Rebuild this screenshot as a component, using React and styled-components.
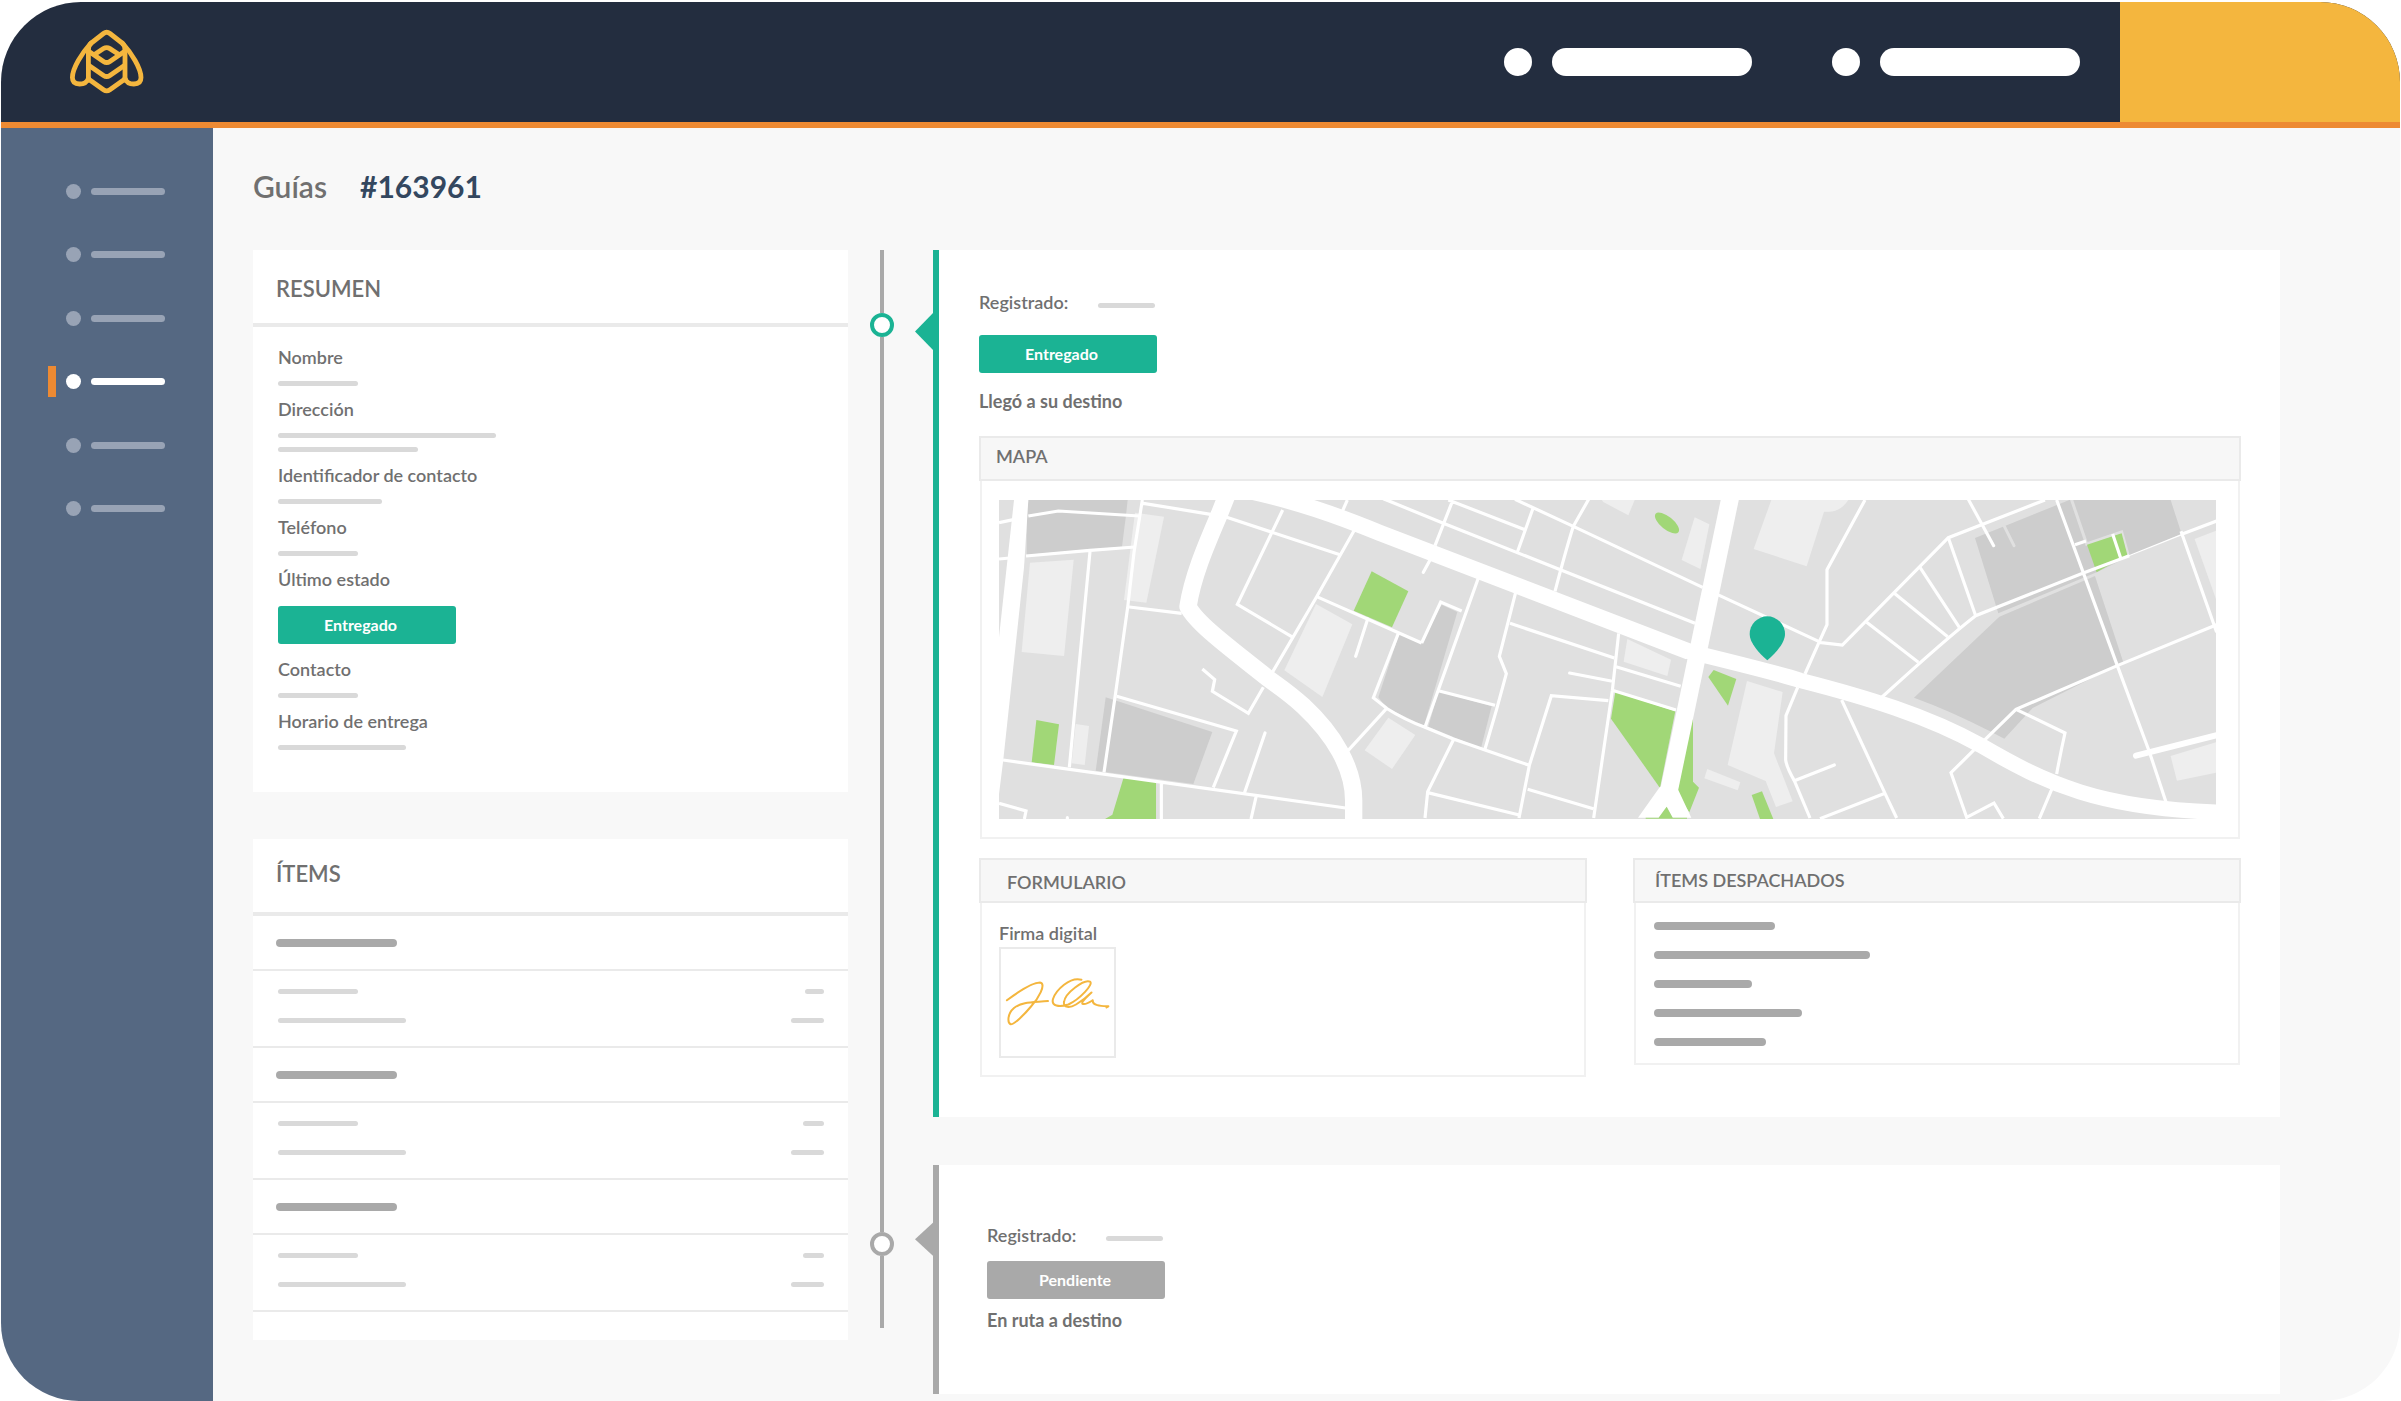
import React from "react";
import styled, { createGlobalStyle } from "styled-components";

const color = {
  navy: "#232d3f",
  slate: "#556882",
  slateLight: "#98a3b5",
  orange: "#ed8a33",
  yellow: "#f4b63e",
  teal: "#1bb394",
  text: "#707070",
  number: "#33475f",
  page: "#f8f8f8",
  line: "#eaeaea",
  lineSoft: "#f1f1f1",
  bar: "#d9d9d9",
  barStrong: "#a9a9a9",
};

const GlobalStyle = createGlobalStyle`
  *, *::before, *::after { box-sizing: border-box; }
  body {
    margin: 0;
    background: #fff;
    color: ${color.text};
    font-family: Lato, "Open Sans", sans-serif;
    font-size: 18px;
    line-height: 24px;
    font-weight: 600;
  }
  h1, h2, h3, p, ul, dl, dd, dt { margin: 0; padding: 0; }
  ul { list-style: none; }
`;

const Frame = styled.div`
  display: flex;
  flex-direction: column;
  min-height: calc(100vh - 2px);
  margin: 2px 1px 0;
  overflow: hidden;
  background: ${color.page};
  border-radius: 80px 80px 78px 78px;
`;

const Header = styled.header`
  display: flex;
  align-items: stretch;
  height: 126px;
  background: ${color.navy};
  border-bottom: 6px solid ${color.orange};
`;

const LogoLink = styled.a`
  display: flex;
  align-items: center;
  margin-left: 68px;
`;

const HeaderNav = styled.nav`
  display: flex;
  align-items: center;
  gap: 80px;
  margin-left: auto;
  padding-right: 40px;
`;

const HeaderLink = styled.a`
  display: flex;
  gap: 20px;
`;

const HeaderDot = styled.span`
  width: 28px;
  height: 28px;
  border-radius: 50%;
  background: #fff;
`;

const HeaderPill = styled.span`
  width: 200px;
  height: 28px;
  border-radius: 14px;
  background: #fff;
`;

const HeaderAccent = styled.div`
  width: 280px;
  background: ${color.yellow};
`;

const Body = styled.div`
  display: flex;
  flex: 1;
`;

const Sidebar = styled.nav`
  flex: none;
  width: 212px;
  padding: 48px 0;
  background: ${color.slate};
`;

const SideList = styled.ul`
  display: flex;
  flex-direction: column;
  justify-content: space-between;
  height: 348px;
`;

const SideLink = styled.a`
  display: flex;
  align-items: center;
  height: 31px;
  margin-left: 47px;
  padding-left: 10px;
  gap: 10px;
  color: ${(p) => (p.$active ? "#fff" : color.slateLight)};
  border-left: 8px solid ${(p) => (p.$active ? color.orange : "transparent")};
`;

const SideDot = styled.span`
  width: 15px;
  height: 15px;
  border-radius: 50%;
  background: currentColor;
`;

const SideBar = styled.span`
  width: 74px;
  height: 7px;
  border-radius: 4px;
  background: currentColor;
`;

const Main = styled.main`
  flex: 1;
  min-width: 0;
  padding: 40px 120px 7px 40px;
`;

const Title = styled.h1`
  display: flex;
  gap: 33px;
  margin-bottom: 46px;
  font-size: 30px;
  line-height: 36px;
  font-weight: 600;
`;

const GuideNumber = styled.span`
  color: ${color.number};
  font-weight: 700;
`;

const Columns = styled.div`
  display: grid;
  grid-template-columns: minmax(0, 595fr) 85px minmax(0, 1347fr);
`;

const Stack = styled.div`
  display: flex;
  flex-direction: column;
  gap: ${(p) => p.$gap}px;
`;

const Card = styled.section`
  background: #fff;
  padding-bottom: ${(p) => p.$bottom}px;
`;

const CardTitle = styled.h2`
  height: 77px;
  padding: ${(p) => p.$top}px 23px 0;
  font-size: 22px;
  line-height: 28px;
  font-weight: 600;
  border-bottom: 4px solid ${color.line};
`;

const Fields = styled.dl`
  display: flex;
  flex-direction: column;
  gap: 11px;
  padding: 18px 25px 0;
`;

const Field = styled.div`
  display: flex;
  flex-direction: column;
  gap: 12px;
  padding-bottom: ${(p) => (p.$badge ? 2 : 0)}px;
`;

const FieldValue = styled.dd`
  display: flex;
  flex-direction: column;
  gap: 9px;
  padding-top: ${(p) => (p.$badge ? 3 : 0)}px;
`;

const Bar = styled.span`
  display: block;
  width: ${(p) => p.$width}px;
  height: ${(p) => (p.$strong ? 8 : 5)}px;
  border-radius: 4px;
  background: ${(p) => (p.$strong ? color.barStrong : color.bar)};
`;

const Badge = styled.span`
  display: block;
  width: 178px;
  height: 38px;
  padding-left: ${(p) => p.$inset}px;
  border-radius: 3px;
  background: ${(p) => p.$tone};
  color: #fff;
  font-size: 16px;
  line-height: 38px;
  font-weight: 700;
`;

const GroupHead = styled.div`
  display: flex;
  align-items: center;
  height: 55px;
  padding: 0 23px;
  border-bottom: 2px solid ${color.line};
`;

const GroupRows = styled.div`
  display: flex;
  flex-direction: column;
  gap: 24px;
  height: 77px;
  padding: 18px 24px 0 25px;
  border-bottom: 2px solid ${color.line};
`;

const GroupRow = styled.div`
  display: flex;
  justify-content: space-between;
`;

const Timeline = styled.div`
  display: flex;
  flex-direction: column;
  align-items: center;
  width: 24px;
  margin-left: 22px;
  padding-bottom: 66px;
`;

const Segment = styled.span`
  width: 4px;
  flex: ${(p) => (p.$height ? `0 0 ${p.$height}px` : "1")};
  background: ${color.barStrong};
`;

const Marker = styled.span`
  flex: none;
  width: 24px;
  height: 24px;
  border: 4px solid ${(p) => p.$tone};
  border-radius: 50%;
  background: #fff;
`;

const Event = styled.article`
  position: relative;
  padding: ${(p) => p.$padding};
  background: #fff;
  border-left: 6px solid ${(p) => p.$tone};

  &::before {
    content: "";
    position: absolute;
    top: ${(p) => p.$arrowTop}px;
    left: -24px;
    width: 19px;
    height: ${(p) => p.$arrowHeight}px;
    background: ${(p) => p.$tone};
    clip-path: polygon(100% 0, 0 50%, 100% 100%);
  }
`;

const Registered = styled.div`
  display: flex;
  align-items: flex-end;
  gap: 30px;

  ${Bar} { margin-bottom: 6px; }
`;

const EventNote = styled.p`
  font-weight: 700;
`;

const EventInfo = styled.div`
  ${Badge} { margin-top: ${(p) => p.$above}px; }
  ${EventNote} { margin-top: ${(p) => p.$below}px; }
`;

const Panels = styled.div`
  display: grid;
  grid-template-columns: 1fr 1fr;
  align-items: start;
  gap: 46px;
  margin-top: 19px;
`;

const MapPanel = styled.section`
  margin-top: 23px;
`;

const PanelTitle = styled.h3`
  height: 45px;
  padding: ${(p) => p.$top}px 0 0 ${(p) => p.$left}px;
  font-size: 18px;
  line-height: 24px;
  font-weight: 600;
  background: #f7f7f7;
  border: 2px solid ${color.line};
`;

const PanelBody = styled.div`
  margin: 0 1px;
  padding: ${(p) => p.$padding};
  border: 2px solid ${color.lineSoft};
  border-top: 0;
`;

const MapDrawing = styled.svg`
  display: block;
  width: 100%;
  height: auto;
  background: #e0e0e0;
`;

const SignatureBox = styled.div`
  display: flex;
  align-items: center;
  justify-content: center;
  width: 117px;
  height: 111px;
  margin-top: 2px;
  padding-top: 2px;
  border: 2px solid ${color.line};
`;

const BarList = styled.ul`
  display: flex;
  flex-direction: column;
  gap: 21px;
`;

const Logo = () => (
  <svg width="76" height="66" viewBox="69 29 76 66" fill="none" stroke={color.yellow} strokeWidth="4.8" strokeLinejoin="round" strokeLinecap="round" aria-hidden="true">
    <path d="M88.4 80V50Q88.4 45 92 42.500L103.500 33.500Q106.700 31 109.900 33.500L121.400 42.500Q125 45 125 50V80" />
    <path d="M88.4 79L103.500 89.800Q106.700 92 109.900 89.800L125 79" />
    <path d="M91 43C82 53 72.400 68 72.400 77.500C72.400 82 75 84 79.500 84C83.500 84 87 82.500 88.400 78.500" />
    <path d="M122.400 43C131.400 53 141 68 141 77.500C141 82 138.400 84 133.900 84C129.900 84 126.400 82.500 125 78.500" />
    <path d="M89 51.500L103.500 61.400Q106.700 63.600 109.900 61.400L124.400 51.500" />
    <path d="M94.500 54.500L103.500 48.600Q106.700 46.600 109.900 48.600L118.900 54.500" />
    <path d="M89 65.500L103.500 75.400Q106.700 77.600 109.900 75.400L124.400 65.500" />
  </svg>
);

/* The map is drawn in three side-by-side sections: west, centre and east. */
const WEST = "translate(-57 -58)";
const CENTRE = "translate(1143 -58)";
const EAST = "translate(2403 -58)";

const CityMap = () => (
  <MapDrawing viewBox="0 0 3651 956" role="img" aria-label="Mapa">
    <g fill="#cdcdcd">
      <g transform={WEST}>
        <path d="M140 58H443L438 104L426 198L140 222Z" />
        <path d="M377 650L697 754L640 910L347 870Z" />
      </g>
      <g transform={CENTRE}>
        <path d="M58 458L125 487L185 372L232 394L132 735L20 682L-5 650Z" />
        <path d="M175 632L335 677L303 803L145 738Z" />
      </g>
      <g transform={EAST}>
        <path d="M525 172L808 58H1112L1145 160L992 225L890 275L595 398Z" />
        <path d="M598 408L885 286L970 545L698 682L613 774L570 752Q450 690 342 651Z" />
      </g>
    </g>
    <g fill="#eeeeee">
      <g transform={WEST}>
        <path d="M465 96L552 108L499 366L432 358Z" />
        <path d="M150 246L281 237L252 526L125 514Z" />
        <path d="M287 730L327 736L314 853L275 848Z" />
        <path d="M1008 370L1117 431L1027 649L913 569Z" />
        <path d="M1225 711L1306 763L1236 865L1154 809Z" />
      </g>
      <g transform={CENTRE}>
        <path d="M665 58H764L745 104L670 64Z" />
        <path d="M944 110L988 131L961 265L905 238Z" />
        <path d="M1174 58H1405Q1382 93 1347 93H1332L1280 257L1121 205Z" />
        <path d="M742 475L873 537L862 586L731 543Z" />
        <path d="M1101 601L1208 634L1182 818L1238 962L1188 979L1157 901L1043 853Z" />
        <path d="M982 865L1081 905L1073 929L973 893Z" />
      </g>
      <g transform={EAST}>
        <path d="M1184 175L1248 150V355Z" />
        <path d="M1112 826L1248 785V876L1131 900Z" />
      </g>
    </g>
    <g transform={EAST} fill="none" stroke="#e0e0e0" strokeWidth="9" strokeLinecap="round">
      <path d="M815 58L860 190L965 154L985 225M612 135L642 195" />
    </g>
    <g fill="#a1d777">
      <g transform={WEST}>
        <path d="M169 718L237 731L222 853L155 845Z" />
        <path d="M431 890L528 905V1015H375L397 1002Z" />
        <path d="M1175 272L1285 332L1236 440L1121 390Z" />
      </g>
      <g transform={CENTRE}>
        <ellipse cx="861" cy="127" rx="44" ry="19" transform="rotate(39 861 127)" />
        <path d="M706 633L886 692L840 922L693 714Z" />
        <path d="M939 700V903L957 921L928 995L880 925Z" />
        <path d="M1001 568L1069 595L1044 675L985 589Z" />
        <path d="M1115 943L1146 932L1180 1015H1140Z" />
      </g>
      <path transform={EAST} d="M861 192L965 158L982 222L890 275Z" />
    </g>
    <g fill="none" stroke="#fff" strokeWidth="9.5" strokeLinejoin="miter">
      <g transform={WEST}>
        <path d="M57 126L100 117M57 235L90 232M145 106L235 91L478 106M138 226L330 209L465 199M330 212L268 860" />
        <path d="M487 58L462 215L443 380L405 650L372 875M448 379L605 398M490 68L692 101M740 110L1080 222" />
        <path d="M908 88L772 371L935 468M1122 150L1010 348L873 582M850 620L805 698L697 632L704 597L667 565" />
        <path d="M410 647L769 751L700 920M69 838L1097 982M544 905V1015M829 945L813 1015M57 968L138 991L133 1015" />
        <path d="M1010 348L1325 487M1255 458L1180 651L1220 683M1220 683L1102 812M1102 58L1087 92" />
        <path strokeLinecap="round" d="M855 757L794 935M262 1011V1020M1163 415L1127 527" />
      </g>
      <g transform={CENTRE}>
        <path d="M10 54L190 128L543 268L945 428M217 62L165 195M205 58L435 147M459 83L412 215" />
        <path d="M405 56L580 137L968 320M627 54L580 137Q560 200 525 332M295 292L135 740M125 487L182 364L245 391" />
        <path d="M407 335L358 527L379 579Q350 690 315 805M390 428L703 532M175 630L345 674" />
        <path d="M18 682Q75 718 135 740L220 775L315 808L448 854M220 778L143 933L135 1012M143 936L418 1003" />
        <path d="M685 660L514 645L448 854L417 1012M443 926L640 984M716 458L697 630L641 1012" />
        <path d="M708 558L902 617M697 629L888 688M1013 342L1316 482" />
        <path d="M1253 620L1218 705L1217 838Q1220 860 1243 900L1290 1012" />
        <path strokeLinecap="round" d="M150 238L130 275M569 577L693 601" />
      </g>
      <g transform={EAST}>
        <path d="M57 485L127 493L445 171L735 58M195 58L81 267V432L57 485L15 580" />
        <path d="M125 658L255 938L290 1012M60 1014L255 938M445 171L527 405M360 260L478 440M283 338L443 468M200 425L355 545" />
        <path d="M243 652Q440 472 527 405L850 277L988 225M770 58L952 555L1047 810L1100 970" />
        <path d="M825 192L858 181M938 160L962 232M1147 160L1255 119M1143 152L1250 455" />
        <path d="M1250 432L952 555L648 686L555 777M522 808L453 876L500 1010L582 967L610 1014M648 686L795 757Q782 815 770 880M757 922L718 1014" />
        <path strokeLinecap="round" d="M-17 900L103 853M505 56L581 195" />
        <path strokeWidth="4" d="M985 226L1147 161" />
        <path strokeWidth="18" strokeLinecap="round" d="M1008 825L1260 761" />
      </g>
    </g>
    <g fill="none" stroke="#fff" strokeLinejoin="round">
      <g transform={WEST}>
        <path fill="#fff" stroke="none" d="M102 58H145L132 260L70 835L57 940V470Z" />
        <path strokeWidth="52" d="M740 45L717 103C680 190 638 285 624 378C650 430 760 510 860 590C900 620 925 635 970 676C1060 760 1121 860 1121 960V1020" />
        <path strokeWidth="49" d="M780 25C950 60 1080 108 1200 157L2127 513" />
      </g>
      <path transform={EAST} strokeWidth="46" d="M-340 511C-200 545 -60 580 0 599C200 650 380 705 540 793C740 910 900 985 1265 995" />
      <g transform={CENTRE}>
        <path strokeWidth="53" d="M1053 40L867 930" />
        <path fill="#fff" stroke="none" d="M840 918L892 922L934 1011L878 1011L860 978L836 1011L774 1011Z" />
      </g>
    </g>
    <g transform={CENTRE}>
      <path fill="#a1d777" d="M860 978L836 1011H797V1014H921V1011H878Z" />
      <path fill={color.teal} d="M1162 407A53 53 0 0 1 1215 460C1215 487 1187 517 1162 539C1137 517 1109 487 1109 460A53 53 0 0 1 1162 407Z" />
    </g>
  </MapDrawing>
);

const Signature = () => (
  <svg width="106" height="52" viewBox="-1 0 106 52" fill="none" stroke={color.yellow} strokeWidth="2" strokeLinecap="round" strokeLinejoin="round" role="img" aria-label="Firma digital">
    <path d="M.9 23.3C12 15 27 5.500 34 5.500C41 6.500 32 22 25 29.500C18 38 8 47.500 4.700 47.300C1.500 46 1 37 8 31C16 24.500 28 25.500 42 24" />
    <path d="M75.400 2.700C64 -.5 50 13 47 22C45 29 53 30.500 62.400 27.500C74 22 88 7 84 4.600C78 2 59 16 58 25C57 31 64 31 70 27.500C76 24 81 20 85.500 15.500C80 21 75 25 76.500 26.800C80 28 84 25 86.800 23.200C86 29 96 29 102.400 29.300L100.500 30.500" />
  </svg>
);

const navItems = ["Inicio", "Pedidos", "Rutas", "Guías", "Clientes", "Ajustes"];

const summary = [
  { label: "Nombre", bars: [80] },
  { label: "Dirección", bars: [218, 140] },
  { label: "Identificador de contacto", bars: [104] },
  { label: "Teléfono", bars: [80] },
  { label: "Último estado", badge: "Entregado" },
  { label: "Contacto", bars: [80] },
  { label: "Horario de entrega", bars: [128] },
];

const groups = [19, 21, 21];
const dispatched = [121, 216, 98, 148, 112];

export default function App() {
  return (
    <>
      <GlobalStyle />
      <Frame>
        <Header>
          <LogoLink href="#inicio" aria-label="Inicio">
            <Logo />
          </LogoLink>
          <HeaderNav aria-label="Cuenta">
            {["Empresa", "Usuario"].map((name) => (
              <HeaderLink key={name} href="#cuenta" aria-label={name}>
                <HeaderDot />
                <HeaderPill />
              </HeaderLink>
            ))}
          </HeaderNav>
          <HeaderAccent />
        </Header>
        <Body>
          <Sidebar aria-label="Principal">
            <SideList>
              {navItems.map((name) => (
                <li key={name}>
                  <SideLink href="#seccion" aria-label={name} $active={name === "Guías"}>
                    <SideDot />
                    <SideBar />
                  </SideLink>
                </li>
              ))}
            </SideList>
          </Sidebar>
          <Main>
            <Title>
              <span>Guías</span>
              <GuideNumber>#163961</GuideNumber>
            </Title>
            <Columns>
              <Stack $gap={47}>
                <Card $bottom={42}>
                  <CardTitle $top={25}>RESUMEN</CardTitle>
                  <Fields>
                    {summary.map(({ label, bars, badge }) => (
                      <Field key={label} $badge={!!badge}>
                        <dt>{label}</dt>
                        <FieldValue $badge={!!badge}>
                          {badge ? (
                            <Badge $tone={color.teal} $inset={46}>{badge}</Badge>
                          ) : (
                            bars.map((width) => <Bar key={width} $width={width} />)
                          )}
                        </FieldValue>
                      </Field>
                    ))}
                  </Fields>
                </Card>
                <Card $bottom={28}>
                  <CardTitle $top={21}>ÍTEMS</CardTitle>
                  {groups.map((width, i) => (
                    <div key={i}>
                      <GroupHead>
                        <Bar $strong $width={121} />
                      </GroupHead>
                      <GroupRows>
                        <GroupRow>
                          <Bar $width={80} />
                          <Bar $width={width} />
                        </GroupRow>
                        <GroupRow>
                          <Bar $width={128} />
                          <Bar $width={33} />
                        </GroupRow>
                      </GroupRows>
                    </div>
                  ))}
                </Card>
              </Stack>
              <Timeline>
                <Segment $height={63} />
                <Marker $tone={color.teal} />
                <Segment />
                <Marker $tone={color.barStrong} />
                <Segment $height={72} />
              </Timeline>
              <Stack $gap={48}>
                <Event $tone={color.teal} $padding="40px 39px 40px 40px" $arrowTop={62} $arrowHeight={39}>
                  <EventInfo $above={21} $below={16}>
                    <Registered>
                      <span>Registrado:</span>
                      <Bar $width={57} />
                    </Registered>
                    <Badge $tone={color.teal} $inset={46}>Entregado</Badge>
                    <EventNote>Llegó a su destino</EventNote>
                  </EventInfo>
                  <MapPanel>
                    <PanelTitle $top={6} $left={15}>MAPA</PanelTitle>
                    <PanelBody $padding="19px 22px 18px 17px">
                      <CityMap />
                    </PanelBody>
                  </MapPanel>
                  <Panels>
                    <section>
                      <PanelTitle $top={10} $left={26}>FORMULARIO</PanelTitle>
                      <PanelBody $padding="18px 17px 17px">
                        <p>Firma digital</p>
                        <SignatureBox>
                          <Signature />
                        </SignatureBox>
                      </PanelBody>
                    </section>
                    <section>
                      <PanelTitle $top={8} $left={20}>ÍTEMS DESPACHADOS</PanelTitle>
                      <PanelBody $padding="19px 18px 17px">
                        <BarList>
                          {dispatched.map((width) => (
                            <li key={width}>
                              <Bar $strong $width={width} />
                            </li>
                          ))}
                        </BarList>
                      </PanelBody>
                    </section>
                  </Panels>
                </Event>
                <Event $tone={color.barStrong} $padding="58px 40px 62px 48px" $arrowTop={57} $arrowHeight={35}>
                  <EventInfo $above={14} $below={9}>
                    <Registered>
                      <span>Registrado:</span>
                      <Bar $width={57} />
                    </Registered>
                    <Badge $tone={color.barStrong} $inset={52}>Pendiente</Badge>
                    <EventNote>En ruta a destino</EventNote>
                  </EventInfo>
                </Event>
              </Stack>
            </Columns>
          </Main>
        </Body>
      </Frame>
    </>
  );
}
